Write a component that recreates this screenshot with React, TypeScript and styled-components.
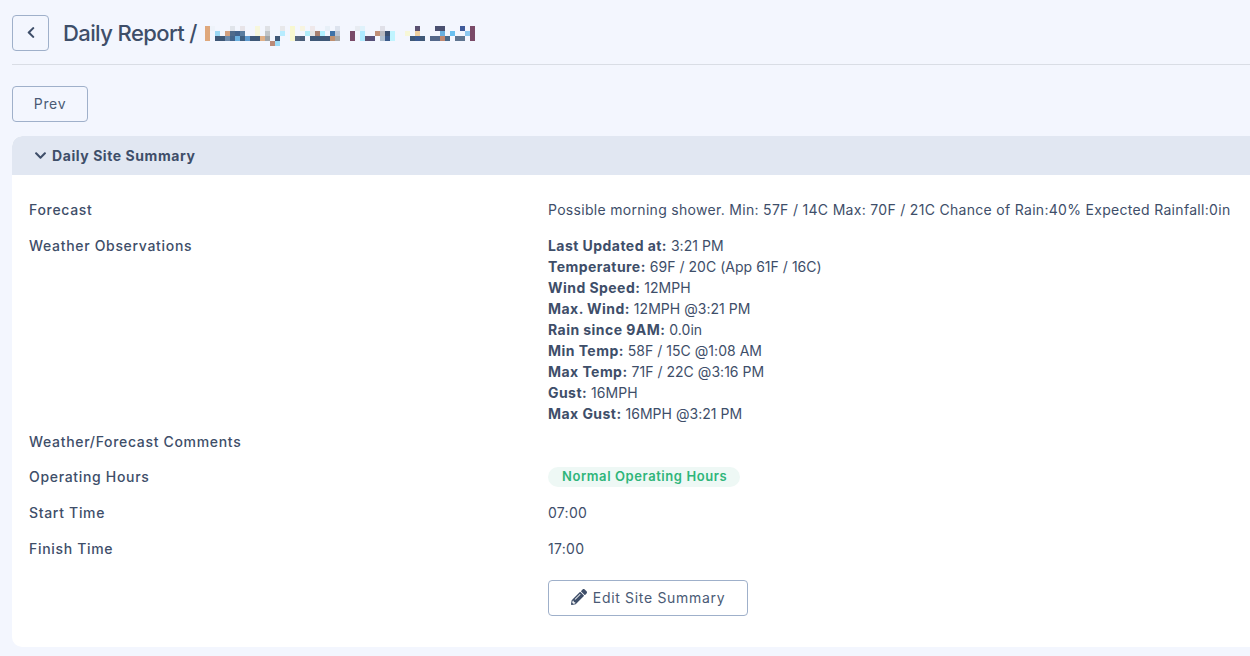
import React from "react";
import styled, { createGlobalStyle } from "styled-components";
import { FaChevronDown, FaChevronLeft, FaPencilAlt } from "react-icons/fa";

const Global = createGlobalStyle`
  html, body { margin: 0; padding: 0; background: #f3f6fe; overflow: hidden; }
  body { font-family: Inter, "Liberation Sans", sans-serif; color: #3e4e69; }
`;

const Page = styled.div`
  height: 656px;
  padding: 0 0 0 12px;
  box-sizing: border-box;
`;
const TopBar = styled.header`
  display: flex;
  align-items: center;
  gap: 14px;
  height: 60px;
  padding: 3px 0 1px;
  border-bottom: 1px solid #d9dde5;
`;
const OutlineButton = styled.button<{ $w: number }>`
  display: inline-flex;
  align-items: center;
  justify-content: center;
  gap: 6px;
  width: ${(p) => p.$w}px;
  height: 36px;
  padding: 0 0 1px;
  box-sizing: border-box;
  background: transparent;
  border: 1px solid #9fb0ca;
  border-radius: 4px;
  color: #4a5a75;
  font: 400 14px Inter, sans-serif;
  letter-spacing: 0.68px;
`;
const BackIcon = styled(FaChevronLeft)`
  width: 12px;
  height: 13px;
  color: #3e4e69;
`;
const Title = styled.h1`
  display: flex;
  align-items: center;
  gap: 8px;
  margin: 0;
  font-size: 22px;
  font-weight: 500;
  letter-spacing: -0.6px;
  color: #3e4e69;
`;
const Toolbar = styled.div`
  padding: 21px 0 14px;
  display: flex;
`;
const Card = styled.section`
  background: #fff;
  border-radius: 10px 0 0 10px;
  overflow: hidden;
`;
const CardHeader = styled.div`
  display: flex;
  align-items: center;
  gap: 5px;
  height: 38px;
  padding: 0 0 1px 22px;
  background: #e1e7f2;
  border-radius: 10px 0 0 0;
  font-size: 14px;
  font-weight: 700;
  letter-spacing: 0.57px;
`;
const HeaderIcon = styled(FaChevronDown)`
  width: 13px;
  height: 13px;
`;
const CardBody = styled.div`
  padding: 16px 0 31px 17px;
`;
const Row = styled.div<{ $bottom?: number }>`
  display: grid;
  grid-template-columns: 519px 1fr;
  padding: 7.5px 0 ${(p) => p.$bottom ?? 7.5}px;
  font-size: 14px;
  line-height: 21px;
  min-height: 21px;
`;
const Label = styled.div`
  font-weight: 500;
  letter-spacing: 0.68px;
`;
const Value = styled.div`
  letter-spacing: 0.305px;
  white-space: nowrap;
`;
const Obs = styled.div`
  letter-spacing: 0.03px;
  b { font-weight: 700; letter-spacing: 0.45px; }
`;
const Pill = styled.span`
  display: block;
  height: 20px;
  margin-top: 1px;
  width: 192px;
  box-sizing: border-box;
  padding-left: 14px;
  border-radius: 10px;
  background: #eef8f5;
  color: #2fb57a;
  font-size: 13px;
  font-weight: 600;
  line-height: 19px;
  letter-spacing: 0.58px;
`;
const ButtonRow = styled.div`
  padding: 13px 0 0 519px;
  display: flex;
`;
const PenIcon = styled(FaPencilAlt)`
  width: 16px;
  height: 16px;
  color: #3e4e69;
`;

const S = 5;
const CELLS: [number, number, number, number, string][] = [
  [0,0,1,3,"#dfa87c"],[1,0,1,1,"#eef3fa"],[2,1,1,1,"#9cd8f4"],[2,2,2,1,"#3f5877"],[4,1,1,1,"#d2a07f"],[4,2,1,1,"#6d8bac"],
  [5,0,1,1,"#e0e4ea"],[5,1,1,1,"#4f6b8c"],[5,2,1,1,"#44658c"],[6,1,1,1,"#43638c"],[6,2,1,1,"#6ab0e0"],[7,0,1,1,"#e8e4e8"],[7,1,1,1,"#5a7da0"],[7,2,1,1,"#3f5f80"],
  [8,2,1,1,"#5e9bd0"],[9,2,1,1,"#3f5877"],[10,0,1,2,"#f7f7dc"],[10,2,1,1,"#3f5877"],[11,2,1,1,"#e0b088"],[12,0,1,1,"#dfe1e5"],[12,1,1,1,"#c0c4c8"],[12,2,1,1,"#a0a4a8"],
  [13,3,1,1,"#bb8a78"],[14,2,1,1,"#3f5877"],[14,3,1,1,"#9cdcf8"],[15,0,1,1,"#e8e8ea"],[15,1,1,1,"#b8ecff"],
  [17,0,1,3,"#f7f7d0"],[18,2,1,1,"#55667f"],[19,0,1,1,"#f7f4e0"],[19,2,1,1,"#4a5d78"],[20,1,1,1,"#b0ecf8"],[21,0,1,1,"#efe8ea"],[21,1,1,1,"#e6e6e6"],[21,2,1,1,"#3f5877"],
  [22,1,1,1,"#a88070"],[22,2,1,1,"#3f5877"],[23,1,1,1,"#b0f0ff"],[23,2,1,1,"#3f5877"],[24,0,1,1,"#e8f0f8"],[24,2,1,1,"#3f5877"],[25,1,1,1,"#3f72a8"],[25,2,1,1,"#c09070"],[26,0,1,1,"#dde3ee"],[26,1,1,1,"#bbc4d4"],[26,2,1,1,"#a8a8a8"],
  [29,1,1,2,"#7a4a68"],[30,0,1,1,"#e8ecf2"],[31,0,1,1,"#dff2fb"],[31,1,1,2,"#aeeaff"],[32,2,1,1,"#5a5070"],[33,2,1,1,"#56507a"],[34,1,1,1,"#c09078"],[35,0,1,1,"#e0e0e8"],[35,1,1,1,"#b8bac0"],[35,2,1,1,"#b0c0d0"],[36,1,1,1,"#3a5070"],[36,2,1,1,"#3a5a8a"],[37,1,1,2,"#c0f4ff"],
  [40,1,1,1,"#f7f7d8"],[42,0,1,1,"#5a5070"],[42,1,1,1,"#f0d0a0"],[41,2,1,1,"#3f5877"],[42,2,1,1,"#3a5a90"],[43,2,1,1,"#3f5877"],
  [45,2,2,1,"#54688a"],[46,0,2,1,"#4a5070"],[47,1,1,1,"#6ab0e0"],[47,2,1,1,"#c08870"],[48,2,1,1,"#4a6888"],[49,1,1,1,"#6ac0f0"],[50,2,2,1,"#5f7590"],[51,0,1,1,"#3f5a9a"],[52,1,1,1,"#8cc8f0"],[53,0,1,3,"#7a4a68"],
];

const MosaicSvg = styled.svg`
  display: block;
  filter: blur(0.5px);
  margin-top: 8px;
`;

const Mosaic = () => (
  <MosaicSvg width={272} height={22} viewBox="0 0 272 22">
    {CELLS.map(([x, y, w, h, c], i) => (
      <rect key={i} x={x * S} y={y * S} width={w * S} height={h * S} fill={c} />
    ))}
  </MosaicSvg>
);

const OBS: [string, string][] = [
  ["Last Updated at:", "3:21 PM"],
  ["Temperature:", "69F / 20C (App 61F / 16C)"],
  ["Wind Speed:", "12MPH"],
  ["Max. Wind:", "12MPH @3:21 PM"],
  ["Rain since 9AM:", "0.0in"],
  ["Min Temp:", "58F / 15C @1:08 AM"],
  ["Max Temp:", "71F / 22C @3:16 PM"],
  ["Gust:", "16MPH"],
  ["Max Gust:", "16MPH @3:21 PM"],
];

export default function App() {
  return (
    <Page>
      <Global />
      <TopBar>
        <OutlineButton $w={37} aria-label="Back"><BackIcon /></OutlineButton>
        <Title>Daily Report / <Mosaic /></Title>
      </TopBar>
      <Toolbar>
        <OutlineButton $w={76}>Prev</OutlineButton>
      </Toolbar>
      <Card>
        <CardHeader><HeaderIcon />Daily Site Summary</CardHeader>
        <CardBody>
          <Row>
            <Label>Forecast</Label>
            <Value>Possible morning shower. Min: 57F / 14C Max: 70F / 21C Chance of Rain:40% Expected Rainfall:0in</Value>
          </Row>
          <Row $bottom={0}>
            <Label>Weather Observations</Label>
            <Value>
              {OBS.map(([k, v]) => (
                <Obs key={k}><b>{k}</b> {v}</Obs>
              ))}
            </Value>
          </Row>
          <Row $bottom={6.5}>
            <Label>Weather/Forecast Comments</Label>
            <Value />
          </Row>
          <Row>
            <Label>Operating Hours</Label>
            <Value><Pill>Normal Operating Hours</Pill></Value>
          </Row>
          <Row>
            <Label>Start Time</Label>
            <Value>07:00</Value>
          </Row>
          <Row>
            <Label>Finish Time</Label>
            <Value>17:00</Value>
          </Row>
          <ButtonRow>
            <OutlineButton $w={200}><PenIcon />Edit Site Summary</OutlineButton>
          </ButtonRow>
        </CardBody>
      </Card>
    </Page>
  );
}
